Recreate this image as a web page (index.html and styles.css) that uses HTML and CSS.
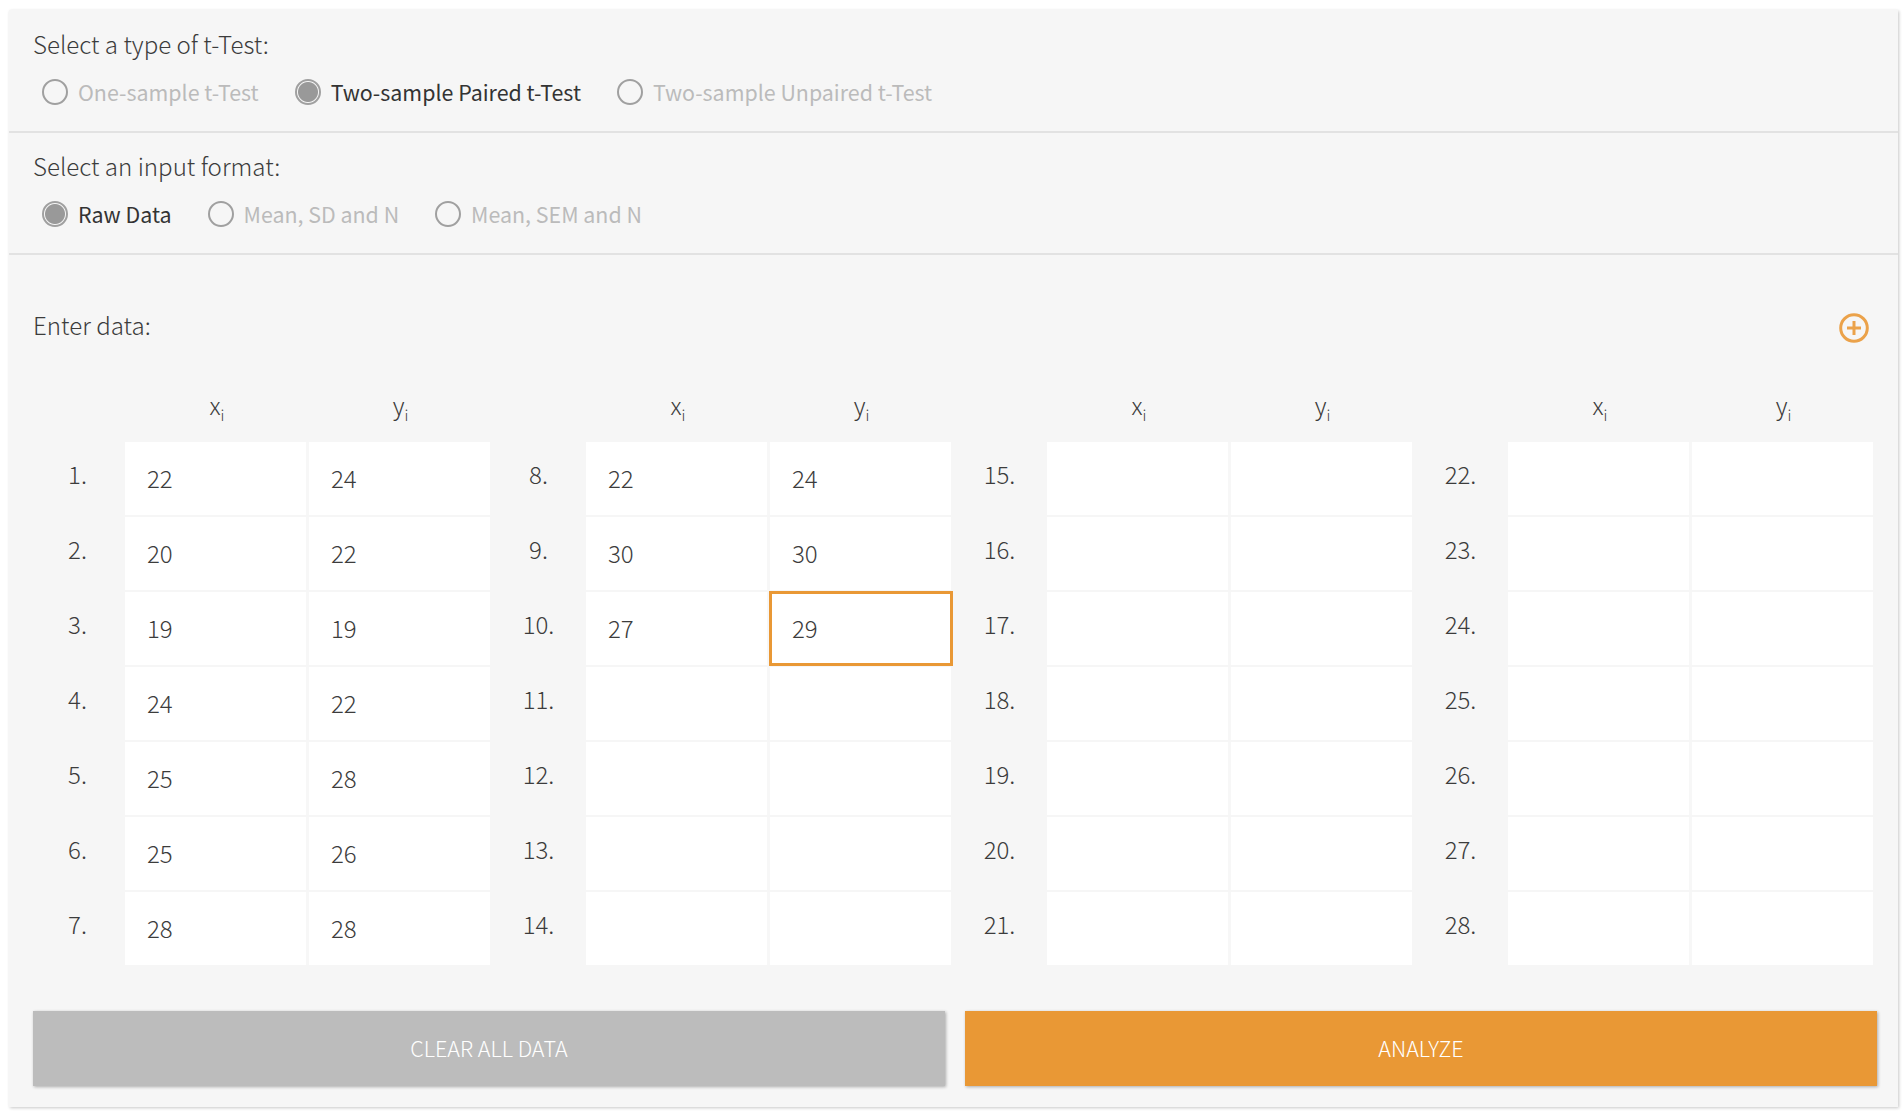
FILE: index.html
```html
<!DOCTYPE html>
<html lang="en">
<head>
<meta charset="utf-8">
<title>t-Test Calculator</title>
<link rel="stylesheet" href="styles.css">
</head>
<body>
<main class="panel">
  <section class="section section-type">
    <h2 class="title">Select a type of t-Test:</h2>
    <div class="options">
      <label class="option"><input class="radio" type="radio" name="type">One-sample t-Test</label>
      <label class="option"><input class="radio" type="radio" name="type" checked>Two-sample Paired t-Test</label>
      <label class="option"><input class="radio" type="radio" name="type">Two-sample Unpaired t-Test</label>
    </div>
  </section>
  <section class="section section-format">
    <h2 class="title">Select an input format:</h2>
    <div class="options">
      <label class="option"><input class="radio" type="radio" name="format" checked>Raw Data</label>
      <label class="option"><input class="radio" type="radio" name="format">Mean, SD and N</label>
      <label class="option"><input class="radio" type="radio" name="format">Mean, SEM and N</label>
    </div>
  </section>
  <section class="data">
    <div class="data-head">
      <h2 class="title">Enter data:</h2>
      <svg class="add" viewBox="0 0 30 30" aria-label="Add rows"><circle cx="15" cy="15" r="13.3" fill="none" stroke="#eba24a" stroke-width="3"/><path d="M15 8v14M8 15h14" fill="none" stroke="#eba24a" stroke-width="3"/></svg>
    </div>
    <div class="groups">
      <div class="group">
        <span></span><div class="head">x<sub>i</sub></div><div class="head head-y">y<sub>i</sub></div>
        <span class="num">1.</span><input class="cell" value="22"><input class="cell" value="24">
        <span class="num">2.</span><input class="cell" value="20"><input class="cell" value="22">
        <span class="num">3.</span><input class="cell" value="19"><input class="cell" value="19">
        <span class="num">4.</span><input class="cell" value="24"><input class="cell" value="22">
        <span class="num">5.</span><input class="cell" value="25"><input class="cell" value="28">
        <span class="num">6.</span><input class="cell" value="25"><input class="cell" value="26">
        <span class="num">7.</span><input class="cell" value="28"><input class="cell" value="28">
      </div>
      <div class="group">
        <span></span><div class="head">x<sub>i</sub></div><div class="head head-y">y<sub>i</sub></div>
        <span class="num">8.</span><input class="cell" value="22"><input class="cell" value="24">
        <span class="num">9.</span><input class="cell" value="30"><input class="cell" value="30">
        <span class="num">10.</span><input class="cell" value="27"><input class="cell cell-active" value="29">
        <span class="num">11.</span><input class="cell"><input class="cell">
        <span class="num">12.</span><input class="cell"><input class="cell">
        <span class="num">13.</span><input class="cell"><input class="cell">
        <span class="num">14.</span><input class="cell"><input class="cell">
      </div>
      <div class="group">
        <span></span><div class="head">x<sub>i</sub></div><div class="head head-y">y<sub>i</sub></div>
        <span class="num">15.</span><input class="cell"><input class="cell">
        <span class="num">16.</span><input class="cell"><input class="cell">
        <span class="num">17.</span><input class="cell"><input class="cell">
        <span class="num">18.</span><input class="cell"><input class="cell">
        <span class="num">19.</span><input class="cell"><input class="cell">
        <span class="num">20.</span><input class="cell"><input class="cell">
        <span class="num">21.</span><input class="cell"><input class="cell">
      </div>
      <div class="group">
        <span></span><div class="head">x<sub>i</sub></div><div class="head head-y">y<sub>i</sub></div>
        <span class="num">22.</span><input class="cell"><input class="cell">
        <span class="num">23.</span><input class="cell"><input class="cell">
        <span class="num">24.</span><input class="cell"><input class="cell">
        <span class="num">25.</span><input class="cell"><input class="cell">
        <span class="num">26.</span><input class="cell"><input class="cell">
        <span class="num">27.</span><input class="cell"><input class="cell">
        <span class="num">28.</span><input class="cell"><input class="cell">
      </div>
    </div>
    <div class="actions">
      <button class="btn btn-clear" type="button">CLEAR ALL DATA</button>
      <button class="btn btn-analyze" type="button">ANALYZE</button>
    </div>
  </section>
</main>
</body>
</html>
```
FILE: styles.css
```css
* { box-sizing: border-box; }
html, body { height: 100%; }
body {
  margin: 0;
  padding: 10px 6px 0 9px;
  background: #fff;
  color: #3c3c3c;
  font-family: "Noto Sans CJK SC", "Source Sans Pro", "Open Sans", sans-serif;
  font-weight: 300;
  overflow: hidden;
}
.panel {
  height: 1097px;
  background: #f6f6f6;
  box-shadow: 1px 1px 3px rgba(0, 0, 0, 0.22);
}
.section {
  padding: 19px 24px 0;
  border-bottom: 2px solid #e2e2e2;
}
.section-type { height: 123px; }
.section-format { height: 122px; padding-top: 18px; }
.title {
  margin: 0;
  font-size: 24.1px;
  font-weight: 300;
  line-height: 30px;
}
.options {
  display: flex;
  gap: 36px;
  margin-top: 18px;
  padding-left: 9px;
}
.option {
  display: flex;
  align-items: center;
  gap: 10px;
  font-size: 21.4px;
  font-weight: 400;
  line-height: 30px;
  color: #bbb;
}
.option:has(:checked) { color: #333; }
.radio {
  appearance: none;
  width: 26px;
  height: 26px;
  margin: 0;
  border: 2px solid #a0a0a0;
  border-radius: 50%;
  background: transparent;
}
.radio:checked {
  background: radial-gradient(circle, #999 0 9.5px, transparent 10.5px);
}
.data { padding: 55px 24px 0; }
.data-head {
  display: flex;
  justify-content: space-between;
  align-items: flex-start;
}
.add {
  width: 30px;
  height: 30px;
  margin: 3px 5px 0 0;
}
.groups {
  display: grid;
  grid-template-columns: repeat(4, 461px);
  margin: 45px 0 0 -4px;
}
.group {
  display: grid;
  grid-template-columns: 96px 184px 181px;
  grid-template-rows: 52px repeat(7, 73px);
  row-gap: 2px;
  column-gap: 0;
}
.head {
  font-size: 24px;
  text-align: center;
  line-height: 30px;
  padding-top: 2px;
}
.head-y { padding-left: 2px; }
.head sub { font-size: 15px; line-height: 0; }
.num {
  font-size: 24px;
  text-align: center;
  line-height: 30px;
  padding: 17px 0 0 1px;
}
.cell {
  width: 100%;
  height: 73px;
  padding: 0 0 2px 22px;
  border: 0;
  border-right: 3px solid #f7f7f7;
  border-radius: 0;
  outline: 0;
  background: #fff;
  color: #3c3c3c;
  font: inherit;
  font-size: 24px;
}
.cell + .cell { border-right: 0; }
.cell-active {
  position: relative;
  width: 184px;
  height: 75px;
  margin: -1px 0 0 -1px;
  padding-left: 20px;
  border: 3px solid #e99835;
}
.cell + .cell-active { border-right: 3px solid #e99835; }
.actions {
  display: flex;
  gap: 20px;
  margin: 46px -3px 0 0;
}
.btn {
  flex: none;
  width: 912px;
  height: 75px;
  padding-bottom: 3px;
  border: 0;
  color: #fff;
  font: inherit;
  font-size: 21.5px;
  box-shadow: 1px 1px 3px rgba(0, 0, 0, 0.3);
}
.btn-clear { background: #bcbcbc; }
.btn-analyze { background: #e99835; }
```
